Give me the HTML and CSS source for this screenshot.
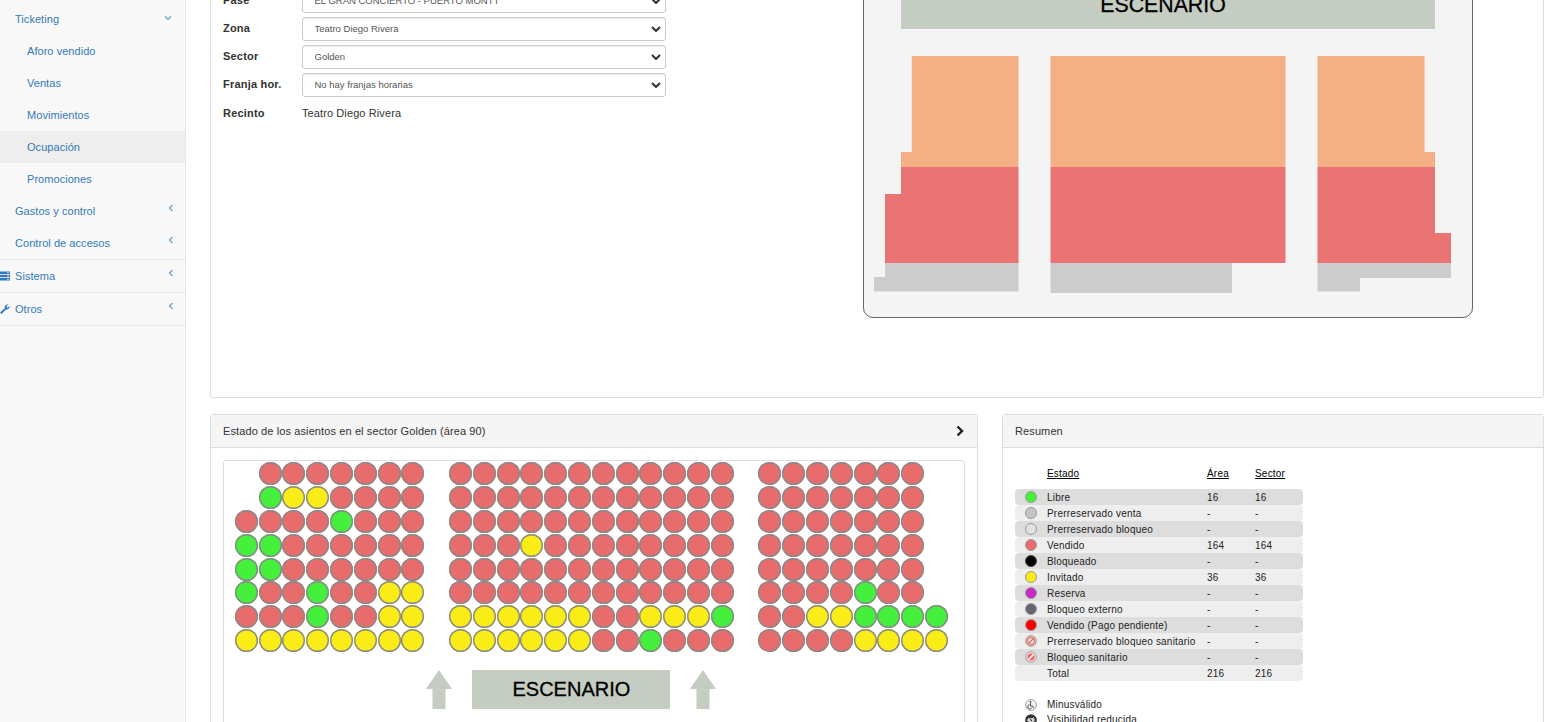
FILE: index.html
```html
<!DOCTYPE html>
<html lang="es">
<head>
<meta charset="utf-8">
<title>Ocupación</title>
<link rel="stylesheet" href="styles.css">
</head>
<body>
<div class="page">
  <nav class="sidebar">
    <a class="nav-item"><span>Ticketing</span><svg class="chev-down" width="8" height="6" viewBox="0 0 8 6"><path d="M1 1.5 4 4.5 7 1.5" fill="none" stroke="#6f9fca" stroke-width="1.200"/></svg></a>
    <a class="nav-item sub">Aforo vendido</a>
    <a class="nav-item sub">Ventas</a>
    <a class="nav-item sub">Movimientos</a>
    <a class="nav-item sub active">Ocupación</a>
    <a class="nav-item sub">Promociones</a>
    <a class="nav-item"><span>Gastos y control</span><svg class="chev" width="6" height="8" viewBox="0 0 6 8"><path d="M4.5 1 1.5 4 4.5 7" fill="none" stroke="#6f9fca" stroke-width="1.200"/></svg></a>
    <a class="nav-item"><span>Control de accesos</span><svg class="chev" width="6" height="8" viewBox="0 0 6 8"><path d="M4.5 1 1.5 4 4.5 7" fill="none" stroke="#6f9fca" stroke-width="1.200"/></svg></a>
    <a class="nav-item top">
      <svg class="nav-icon" width="10" height="10" viewBox="0 0 10 10"><path d="M0 .5h10v2.400H0zM0 3.800h10v2.400H0zM0 7.100h10v2.400H0z" fill="#337ab7"/><path d="M7 1.700h2M7 5h2M7 8.300h2" stroke="#fff" stroke-width=".7"/></svg>
      <span>Sistema</span><svg class="chev" width="6" height="8" viewBox="0 0 6 8"><path d="M4.5 1 1.5 4 4.5 7" fill="none" stroke="#6f9fca" stroke-width="1.200"/></svg></a>
    <a class="nav-item top">
      <svg class="nav-icon" width="10" height="10" viewBox="0 0 10 10"><path d="M0 8.400 4.800 4.200C4.400 2.200 5.800.3 8.200.6L6.400 2.400 7.500 3.700 9.600 1.900C10 4.300 7.800 6 6 5.400L1.500 10Z" fill="#337ab7"/></svg>
      <span>Otros</span><svg class="chev" width="6" height="8" viewBox="0 0 6 8"><path d="M4.5 1 1.5 4 4.5 7" fill="none" stroke="#6f9fca" stroke-width="1.200"/></svg></a>
  </nav>

  <main class="main">
    <section class="panel filters">
      <form class="filter-form">
        <div class="field"><label>Pase</label><select><option>EL GRAN CONCIERTO - PUERTO MONTT</option></select></div>
        <div class="field"><label>Zona</label><select><option>Teatro Diego Rivera</option></select></div>
        <div class="field"><label>Sector</label><select><option>Golden</option></select></div>
        <div class="field"><label>Franja hor.</label><select><option>No hay franjas horarias</option></select></div>
        <div class="field static"><label>Recinto</label><span>Teatro Diego Rivera</span></div>
      </form>
      <div class="venue">
        <svg width="608" height="326" viewBox="864 -9 608 326">
          <rect x="901" y="-9" width="534" height="38" fill="#c5ccc1"/>
          <text x="1163" y="12" text-anchor="middle" class="stage-text">ESCENARIO</text>
          <g fill="#f5af85">
            <path d="M911.7 56H1018.5V167H901V152H911.7Z"/>
            <path d="M1050.5 56H1285.5V167H1050.5Z"/>
            <path d="M1317.5 56H1424.500V152H1435V167H1317.5Z"/>
          </g>
          <g fill="#ea7373">
            <path d="M901 167H1018.5V263H885V194H901Z"/>
            <path d="M1050.5 167H1285.5V263H1050.5Z"/>
            <path d="M1317.5 167H1435V233H1451V263H1317.5Z"/>
          </g>
          <g fill="#cccccc">
            <path d="M885 263H1018.5V291.5H874V277H885Z"/>
            <path d="M1050.5 263H1232V293H1050.5Z"/>
            <path d="M1317.5 263H1451V278H1360V291.5H1317.5Z"/>
          </g>
        </svg>
      </div>
    </section>

    <div class="bottom">
      <section class="panel seats-panel">
        <header class="panel-head"><span>Estado de los asientos en el sector Golden (área 90)</span>
          <svg width="10" height="12" viewBox="0 0 10 12"><path d="M2.5 1.500 7 6 2.5 10.500" fill="none" stroke="#222" stroke-width="2.400"/></svg>
        </header>
        <div class="panel-body">
          <div class="seat-map">
            <div class="seats">
              <i></i><i class="r"></i><i class="r"></i><i class="r"></i><i class="r"></i><i class="r"></i><i class="r"></i><i class="r"></i><i></i><i class="r"></i><i class="r"></i><i class="r"></i><i class="r"></i><i class="r"></i><i class="r"></i><i class="r"></i><i class="r"></i><i class="r"></i><i class="r"></i><i class="r"></i><i class="r"></i><i></i><i class="r"></i><i class="r"></i><i class="r"></i><i class="r"></i><i class="r"></i><i class="r"></i><i class="r"></i><i></i>
              <i></i><i class="g"></i><i class="y"></i><i class="y"></i><i class="r"></i><i class="r"></i><i class="r"></i><i class="r"></i><i></i><i class="r"></i><i class="r"></i><i class="r"></i><i class="r"></i><i class="r"></i><i class="r"></i><i class="r"></i><i class="r"></i><i class="r"></i><i class="r"></i><i class="r"></i><i class="r"></i><i></i><i class="r"></i><i class="r"></i><i class="r"></i><i class="r"></i><i class="r"></i><i class="r"></i><i class="r"></i><i></i>
              <i class="r"></i><i class="r"></i><i class="r"></i><i class="r"></i><i class="g"></i><i class="r"></i><i class="r"></i><i class="r"></i><i></i><i class="r"></i><i class="r"></i><i class="r"></i><i class="r"></i><i class="r"></i><i class="r"></i><i class="r"></i><i class="r"></i><i class="r"></i><i class="r"></i><i class="r"></i><i class="r"></i><i></i><i class="r"></i><i class="r"></i><i class="r"></i><i class="r"></i><i class="r"></i><i class="r"></i><i class="r"></i><i></i>
              <i class="g"></i><i class="g"></i><i class="r"></i><i class="r"></i><i class="r"></i><i class="r"></i><i class="r"></i><i class="r"></i><i></i><i class="r"></i><i class="r"></i><i class="r"></i><i class="y"></i><i class="r"></i><i class="r"></i><i class="r"></i><i class="r"></i><i class="r"></i><i class="r"></i><i class="r"></i><i class="r"></i><i></i><i class="r"></i><i class="r"></i><i class="r"></i><i class="r"></i><i class="r"></i><i class="r"></i><i class="r"></i><i></i>
              <i class="g"></i><i class="g"></i><i class="r"></i><i class="r"></i><i class="r"></i><i class="r"></i><i class="r"></i><i class="r"></i><i></i><i class="r"></i><i class="r"></i><i class="r"></i><i class="r"></i><i class="r"></i><i class="r"></i><i class="r"></i><i class="r"></i><i class="r"></i><i class="r"></i><i class="r"></i><i class="r"></i><i></i><i class="r"></i><i class="r"></i><i class="r"></i><i class="r"></i><i class="r"></i><i class="r"></i><i class="r"></i><i></i>
              <i class="g"></i><i class="r"></i><i class="r"></i><i class="g"></i><i class="r"></i><i class="r"></i><i class="y"></i><i class="y"></i><i></i><i class="r"></i><i class="r"></i><i class="r"></i><i class="r"></i><i class="r"></i><i class="r"></i><i class="r"></i><i class="r"></i><i class="r"></i><i class="r"></i><i class="r"></i><i class="r"></i><i></i><i class="r"></i><i class="r"></i><i class="r"></i><i class="r"></i><i class="g"></i><i class="r"></i><i class="r"></i><i></i>
              <i class="r"></i><i class="r"></i><i class="r"></i><i class="g"></i><i class="r"></i><i class="r"></i><i class="y"></i><i class="y"></i><i></i><i class="y"></i><i class="y"></i><i class="y"></i><i class="y"></i><i class="y"></i><i class="y"></i><i class="r"></i><i class="r"></i><i class="y"></i><i class="y"></i><i class="y"></i><i class="g"></i><i></i><i class="r"></i><i class="r"></i><i class="y"></i><i class="y"></i><i class="g"></i><i class="g"></i><i class="g"></i><i class="g"></i>
              <i class="y"></i><i class="y"></i><i class="y"></i><i class="y"></i><i class="y"></i><i class="y"></i><i class="y"></i><i class="y"></i><i></i><i class="y"></i><i class="y"></i><i class="y"></i><i class="y"></i><i class="y"></i><i class="y"></i><i class="r"></i><i class="r"></i><i class="g"></i><i class="r"></i><i class="r"></i><i class="r"></i><i></i><i class="r"></i><i class="r"></i><i class="r"></i><i class="r"></i><i class="y"></i><i class="y"></i><i class="y"></i><i class="y"></i>
            </div>
            <div class="stage-row">
              <svg width="26" height="39" viewBox="0 0 26 39"><path d="M13 0 26 19H19.500V39H6.500V19H0Z" fill="#c5ccc1"/></svg>
              <div class="stage-box">ESCENARIO</div>
              <svg width="26" height="39" viewBox="0 0 26 39"><path d="M13 0 26 19H19.500V39H6.500V19H0Z" fill="#c5ccc1"/></svg>
            </div>
          </div>
        </div>
      </section>

      <section class="panel summary-panel">
        <header class="panel-head"><span>Resumen</span></header>
        <div class="summary-body">
          <div class="row head"><span></span><u>Estado</u><u>Área</u><u>Sector</u></div>
          <div class="rows">
            <div class="row"><span class="dot g"></span><span>Libre</span><span>16</span><span>16</span></div>
            <div class="row"><span class="dot pv"></span><span>Prerreservado venta</span><span>-</span><span>-</span></div>
            <div class="row"><span class="dot pb"></span><span>Prerreservado bloqueo</span><span>-</span><span>-</span></div>
            <div class="row"><span class="dot r"></span><span>Vendido</span><span>164</span><span>164</span></div>
            <div class="row"><span class="dot k"></span><span>Bloqueado</span><span>-</span><span>-</span></div>
            <div class="row"><span class="dot y"></span><span>Invitado</span><span>36</span><span>36</span></div>
            <div class="row"><span class="dot m"></span><span>Reserva</span><span>-</span><span>-</span></div>
            <div class="row"><span class="dot e"></span><span>Bloqueo externo</span><span>-</span><span>-</span></div>
            <div class="row"><span class="dot p"></span><span>Vendido (Pago pendiente)</span><span>-</span><span>-</span></div>
            <div class="row"><svg class="san" width="12" height="12" viewBox="0 0 12 12"><circle cx="6" cy="6" r="5.400" fill="#e8a8a2" stroke="#999" stroke-width=".8"/><circle cx="6" cy="6" r="3.400" fill="#eee" stroke="#d9695f" stroke-width="1"/><path d="M3.500 8.500 8.500 3.500" stroke="#d9695f" stroke-width="1.300"/></svg><span>Prerreservado bloqueo sanitario</span><span>-</span><span>-</span></div>
            <div class="row"><svg class="san" width="12" height="12" viewBox="0 0 12 12"><circle cx="6" cy="6" r="5.400" fill="#f4d6d3" stroke="#999" stroke-width=".8"/><circle cx="6" cy="6" r="3.600" fill="#e86c6c"/><path d="M3.500 8.500 8.500 3.500" stroke="#fff" stroke-width="1.400"/></svg><span>Bloqueo sanitario</span><span>-</span><span>-</span></div>
            <div class="row"><span></span><span>Total</span><span>216</span><span>216</span></div>
          </div>
          <div class="legend">
            <div class="legend-row"><svg width="12" height="12" viewBox="0 0 12 12"><circle cx="6" cy="6" r="5.400" fill="#f4f4f4" stroke="#888" stroke-width=".8"/><circle cx="5.500" cy="2.800" r=".9" fill="#444"/><path d="M5.500 4v3h2.200l1 2M4.500 5.500a2.200 2.200 0 1 0 2.500 3" fill="none" stroke="#444" stroke-width=".9"/></svg><span>Minusválido</span></div>
            <div class="legend-row"><svg width="12" height="12" viewBox="0 0 12 12"><circle cx="6" cy="6" r="5.800" fill="#333"/><ellipse cx="6" cy="6" rx="3.800" ry="2" fill="#ddd"/><circle cx="6" cy="6" r="1.200" fill="#333"/><path d="M3 9 9 3" stroke="#ddd" stroke-width=".8"/></svg><span>Visibilidad reducida</span></div>
          </div>
        </div>
      </section>
    </div>
  </main>
</div>
</body>
</html>
```
FILE: styles.css
```css
* { box-sizing: border-box; }
html, body { margin: 0; height: 722px; overflow: hidden; background: #fff; }
body { font-family: "Liberation Sans", Arial, sans-serif; font-size: 11px; color: #333; }
.page { display: flex; height: 722px; overflow: hidden; }

.sidebar { flex: 0 0 186px; height: 722px; padding-top: 3px; background: #f8f8f8; border-right: 1px solid #e7e7e7; }
.nav-item { position: relative; display: flex; align-items: center; height: 32px; padding-left: 15px; color: #337ab7; font-size: 11px; letter-spacing: .05px; }
.nav-item.sub { padding-left: 27px; }
.nav-item.active { background: #eee; }
.nav-item.top { height: 33px; border-bottom: 1px solid #e7e7e7; }
.nav-item.top:nth-of-type(9) { height: 34px; border-top: 1px solid #e7e7e7; }
.chev { position: absolute; right: 11px; top: 9px; }
.chev-down { position: absolute; right: 13px; top: 12px; }
.nav-icon { position: absolute; left: 0; top: 11px; }

.main { flex: 1; min-width: 0; padding: 0 8px 0 24px; }
.panel { border: 1px solid #ddd; border-radius: 3px; background: #fff; }

.filters { display: flex; height: 418px; margin-top: -20px; padding: 8px 12px; }
.filter-form { flex: 0 0 443px; display: flex; flex-direction: column; gap: 4px; }
.field { display: flex; align-items: center; height: 24px; letter-spacing: .1px; }
.field label { flex: 0 0 79px; padding-bottom: 2px; font-weight: bold; font-size: 11px; letter-spacing: .2px; color: #333; }
.field select { flex: 1; height: 24px; padding: 0 28px 2px 11.5px; appearance: none; font: 9.5px "Liberation Sans", Arial, sans-serif; letter-spacing: 0; color: #555; background: #fff url("data:image/svg+xml,%3Csvg xmlns='http://www.w3.org/2000/svg' width='10' height='6'%3E%3Cpath d='M1 1l4 4 4-4' fill='none' stroke='%23333' stroke-width='2'/%3E%3C/svg%3E") no-repeat right 4px center; border: 1px solid #ccc; border-radius: 3px; box-shadow: inset 0 1px 1px rgba(0,0,0,.075); }
.field.static span { padding-bottom: 2px; }
.field.static { margin-top: 1px; }
.venue { width: 610px; height: 328px; margin: 1px 0 0 197px; background: #f4f4f4; border: 1px solid #666; border-radius: 10px; overflow: hidden; flex: none; }
.venue svg { display: block; }
.stage-text { font: 21.3px "Liberation Sans", Arial, sans-serif; fill: #000; stroke: #000; stroke-width: .3px; }

.bottom { display: flex; gap: 24px; margin-top: 16px; height: 340px; }
.panel-head { display: flex; align-items: center; justify-content: space-between; height: 33px; padding: 0 12px; background: #f5f5f5; border-bottom: 1px solid #ddd; font-size: 11px; letter-spacing: .11px; color: #333; }
.seats-panel { flex: 0 0 768px; }
.summary-panel { flex: 1; }
.panel-body { padding: 12px; }
.seat-map { border: 1px solid #ddd; border-radius: 3px; height: 300px; padding: 1px 0 0 10.4px; }
.seats { display: grid; grid-template-columns: repeat(30, 23.8px); grid-auto-rows: 23.8px; }
.seats i { display: block; width: 23px; height: 23px; margin: .4px; border-radius: 50%; }
.seats .r { background: #e86c6c; box-shadow: inset 0 0 0 1.4px #8a8a8a; }
.seats .g { background: #44f03c; box-shadow: inset 0 0 0 1.4px #8a8a8a; }
.seats .y { background: #f9ec17; box-shadow: inset 0 0 0 1.4px #8a8a8a; }
.stage-row { display: flex; align-items: flex-start; gap: 20px; margin: 18px 0 0 192px; }
.stage-box { width: 198px; height: 39px; line-height: 39px; text-align: center; background: #c5ccc1; color: #000; font-size: 20px; -webkit-text-stroke: .3px #000; }

.summary-body { padding: 17px 12px 0; font-size: 10px; letter-spacing: .2px; color: #222; }
.row { display: grid; grid-template-columns: 32px 160px 48px 48px; align-items: center; width: 288px; height: 16px; border-radius: 4px; }
.row.head { margin-bottom: 8px; color: #000; }
.rows .row:nth-child(odd) { background: #ddd; }
.rows .row:nth-child(even) { background: #eee; }
.dot { display: block; width: 12px; height: 12px; margin-left: 10px; border-radius: 50%; border: 1px solid #999; }
.san { margin-left: 10px; }
.dot.g { background: #44f03c; }
.dot.pv { background: #c4c4c4; }
.dot.pb { background: #e2e2e2; }
.dot.r { background: #e86c6c; }
.dot.k { background: #000; border-color: #444; }
.dot.y { background: #f9ec17; }
.dot.m { background: #c828c8; }
.dot.e { background: #666670; }
.dot.p { background: #f00; }
.legend { margin-top: 16px; }
.legend-row { display: grid; grid-template-columns: 32px auto; align-items: center; height: 15px; }
.legend-row svg { margin-left: 10px; }
```
